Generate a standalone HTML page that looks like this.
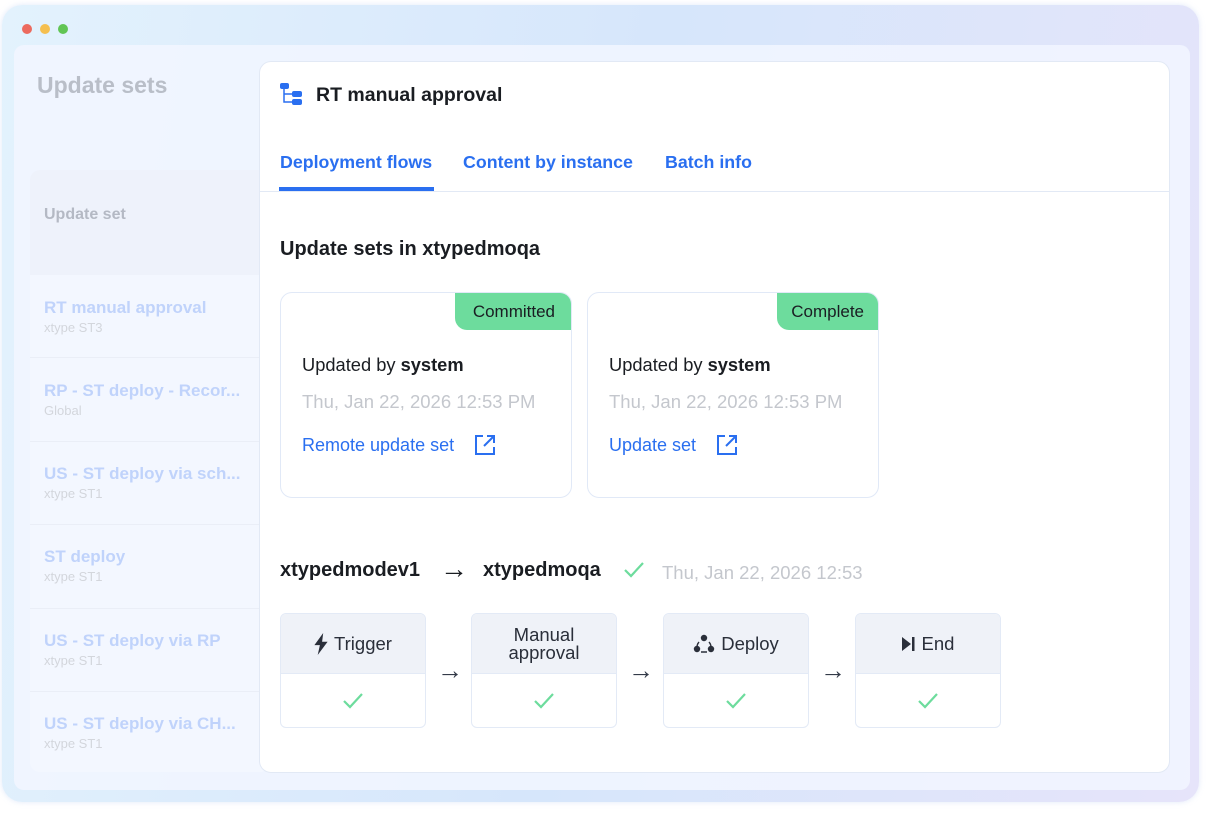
<!DOCTYPE html>
<html><head><meta charset="utf-8"><style>
*{margin:0;padding:0;box-sizing:border-box}
body{width:1231px;height:835px;background:#fff;font-family:"Liberation Sans",sans-serif;position:relative;overflow:hidden}
.win{position:absolute;left:2px;top:5px;width:1197px;height:797px;border-radius:20px;background:linear-gradient(100deg,#e3f2fd 0%,#d6e6fb 50%,#e6e4fa 100%);box-shadow:0 0 6px rgba(180,200,240,.4)}
.dot{position:absolute;top:19px;width:10px;height:10px;border-radius:50%}
.inner{position:absolute;left:14px;top:45px;width:1176px;height:745px;border-radius:10px;background:rgba(242,246,255,.85)}
.side h1{position:absolute;left:37px;top:72px;font-size:23px;color:#b9bec8;font-weight:bold}
.scard{position:absolute;left:30px;top:170px;width:240px;height:602px;border-radius:10px;background:#f3f7ff}
.shead{position:absolute;left:30px;top:170px;width:240px;height:105px;background:#eef2fb;border-radius:10px 10px 0 0}
.shead span{position:absolute;left:14px;top:36px;font-size:16px;color:#b4b9c4;font-weight:bold}
.item{position:absolute;left:44px;font-weight:bold;color:#c0d3fb;font-size:17px;white-space:nowrap}
.item small{display:block;font-weight:normal;color:#d3d6dc;font-size:13px;margin-top:2px}
.sep{position:absolute;left:30px;width:230px;height:1px;background:#eaeef7}
.main{position:absolute;left:259px;top:61px;width:911px;height:712px;background:#fff;border-radius:12px;border:1px solid #e2e9f5}
.t{position:absolute;white-space:nowrap}
.card{position:absolute;top:292px;width:292px;height:206px;border:1.5px solid #e1e9f7;border-radius:12px;overflow:hidden}
.badge{position:absolute;right:0;top:0;height:37px;background:#6ddc9d;border-radius:0 0 0 12px;font-size:17px;color:#1a1d22;padding:9px 14px 0 14px}
.step{position:absolute;top:613px;width:146px;height:115px;border:1.5px solid #e3eaf6;border-radius:6px;overflow:hidden}
.step .h{height:60px;background:#eff2f8;border-bottom:1.5px solid #e3eaf6;display:flex;align-items:center;justify-content:center;font-size:18.5px;color:#2a2f3a;text-align:center;line-height:18px;gap:6px}
.step svg.ck{position:absolute;left:61px;top:78px}
.arr{position:absolute;top:655px;font-size:26px;color:#333a48}
</style></head><body>
<div class="win">
<div class="dot" style="left:20px;background:#ec6a5e"></div>
<div class="dot" style="left:38px;background:#f5bf4f"></div>
<div class="dot" style="left:56px;background:#61c554"></div>
</div>
<div class="inner"></div>
<div class="side"><h1>Update sets</h1></div>
<div class="scard"></div>
<div class="shead"><span>Update set</span></div>
<div class="item" style="top:298px">RT manual approval<small>xtype ST3</small></div>
<div class="sep" style="top:357px"></div>
<div class="item" style="top:381px">RP - ST deploy - Recor...<small>Global</small></div>
<div class="sep" style="top:441px"></div>
<div class="item" style="top:464px">US - ST deploy via sch...<small>xtype ST1</small></div>
<div class="sep" style="top:524px"></div>
<div class="item" style="top:547px">ST deploy<small>xtype ST1</small></div>
<div class="sep" style="top:608px"></div>
<div class="item" style="top:631px">US - ST deploy via RP<small>xtype ST1</small></div>
<div class="sep" style="top:691px"></div>
<div class="item" style="top:714px">US - ST deploy via CH...<small>xtype ST1</small></div>

<div class="main"></div>
<svg style="position:absolute;left:280px;top:83px" width="24" height="24" viewBox="0 0 24 24"><rect x="0" y="0" width="9" height="6" rx="2" fill="#2a6ff0"/><rect x="12" y="8" width="10" height="6" rx="2" fill="#2a6ff0"/><rect x="12" y="16" width="10" height="6" rx="2" fill="#2a6ff0"/><path d="M4 6V19H12M4 11H12" stroke="#2a6ff0" stroke-width="1.5" fill="none"/></svg>
<div class="t" style="left:316px;top:84px;font-size:19.5px;color:#1a1d22;font-weight:bold">RT manual approval</div>
<div class="t" style="left:280px;top:152px;font-size:17.8px;color:#2a6ff0;font-weight:bold">Deployment flows</div>
<div class="t" style="left:463px;top:152px;font-size:17.8px;color:#2a6ff0;font-weight:bold">Content by instance</div>
<div class="t" style="left:665px;top:152px;font-size:17.8px;color:#2a6ff0;font-weight:bold">Batch info</div>
<div style="position:absolute;left:260px;top:191px;width:909px;height:1px;background:#e2e9f5"></div>
<div style="position:absolute;left:279px;top:187px;width:155px;height:4px;background:#2a6ff0"></div>
<div class="t" style="left:280px;top:238px;font-size:20px;color:#1a1d22;font-weight:bold">Update sets in xtypedmoqa</div>

<div class="card" style="left:280px"><div class="badge" style="padding:9px 16px 0 18px">Committed</div>
<div class="t" style="left:21px;top:61px;font-size:18.3px;color:#1a1d22">Updated by <b>system</b></div>
<div class="t" style="left:21px;top:98px;font-size:18.5px;color:#c4c7cd">Thu, Jan 22, 2026 12:53 PM</div>
<div class="t" style="left:21px;top:142px;font-size:18px;color:#2a6ff0">Remote update set</div>
<svg style="position:absolute;left:193px;top:141px" width="22" height="22" viewBox="0 0 22 22" fill="none" stroke="#2a6ff0" stroke-width="2"><path d="M9 2H2V20H20V13M13 2H20V9M20 2L10 12"/></svg>
</div>
<div class="card" style="left:587px"><div class="badge">Complete</div>
<div class="t" style="left:21px;top:61px;font-size:18.3px;color:#1a1d22">Updated by <b>system</b></div>
<div class="t" style="left:21px;top:98px;font-size:18.5px;color:#c4c7cd">Thu, Jan 22, 2026 12:53 PM</div>
<div class="t" style="left:21px;top:142px;font-size:18px;color:#2a6ff0">Update set</div>
<svg style="position:absolute;left:128px;top:141px" width="22" height="22" viewBox="0 0 22 22" fill="none" stroke="#2a6ff0" stroke-width="2"><path d="M9 2H2V20H20V13M13 2H20V9M20 2L10 12"/></svg>
</div>

<div class="t" style="left:280px;top:559px;font-size:20px;color:#1a1d22;font-weight:bold">xtypedmodev1</div>
<div class="t" style="left:440px;top:553px;font-size:28px;color:#1a1d22">→</div>
<div class="t" style="left:483px;top:559px;font-size:20px;color:#1a1d22;font-weight:bold">xtypedmoqa</div>
<svg style="position:absolute;left:623px;top:561px" width="22" height="18" viewBox="0 0 22 18"><path d="M2 9L8 15L20 2" stroke="#6ddc9d" stroke-width="2.2" fill="none"/></svg>
<div class="t" style="left:662px;top:562px;font-size:18.5px;color:#c4c7cd">Thu, Jan 22, 2026 12:53</div>

<div class="step" style="left:280px"><div class="h"><svg width="14" height="22" viewBox="0 0 12 20"><path d="M8 0L0 11H5L3 20L12 8H7Z" fill="#2a2f3a"/></svg>Trigger</div><svg class="ck" width="22" height="18" viewBox="0 0 22 18"><path d="M2 9L8 15L20 2" stroke="#6ddc9d" stroke-width="2.2" fill="none"/></svg></div>
<div class="arr" style="left:437px">→</div>
<div class="step" style="left:471px"><div class="h">Manual<br>approval</div><svg class="ck" width="22" height="18" viewBox="0 0 22 18"><path d="M2 9L8 15L20 2" stroke="#6ddc9d" stroke-width="2.2" fill="none"/></svg></div>
<div class="arr" style="left:628px">→</div>
<div class="step" style="left:663px"><div class="h"><svg width="22" height="20" viewBox="0 0 22 20"><circle cx="11" cy="4" r="3.2" fill="#2a2f3a"/><circle cx="4" cy="15" r="3.2" fill="#2a2f3a"/><circle cx="18" cy="15" r="3.2" fill="#2a2f3a"/><path d="M6 8A8 8 0 0 0 4 12M16 8A8 8 0 0 1 18 12M8 18H14" stroke="#2a2f3a" stroke-width="1.4" fill="none"/></svg>Deploy</div><svg class="ck" width="22" height="18" viewBox="0 0 22 18"><path d="M2 9L8 15L20 2" stroke="#6ddc9d" stroke-width="2.2" fill="none"/></svg></div>
<div class="arr" style="left:820px">→</div>
<div class="step" style="left:855px"><div class="h"><svg width="14" height="14" viewBox="0 0 14 14"><path d="M0 0L9 7L0 14Z" fill="#2a2f3a"/><rect x="10" y="0" width="2.5" height="14" fill="#2a2f3a"/></svg>End</div><svg class="ck" width="22" height="18" viewBox="0 0 22 18"><path d="M2 9L8 15L20 2" stroke="#6ddc9d" stroke-width="2.2" fill="none"/></svg></div>
</body></html>
